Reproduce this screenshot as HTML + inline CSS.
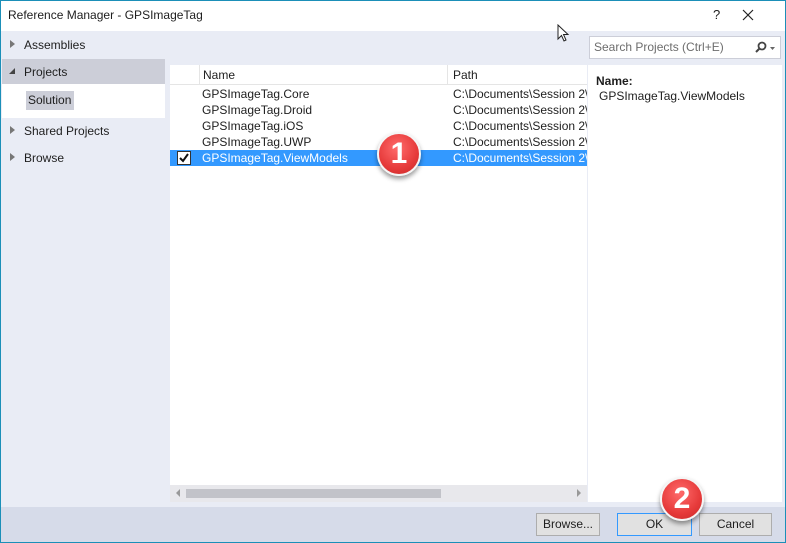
<!DOCTYPE html>
<html><head><style>
*{margin:0;padding:0;box-sizing:border-box}
body{width:786px;height:543px;overflow:hidden;font-family:"Liberation Sans",sans-serif;font-size:12px;color:#1e1e1e;position:relative;background:#fff}
.a{position:absolute;white-space:nowrap}
.win{left:0;top:0;width:786px;height:543px;border:1px solid #1b8fb8}
.row{position:absolute;left:32px;height:16px;line-height:16px;white-space:nowrap}
.path{position:absolute;left:283px;height:16px;line-height:16px;white-space:nowrap}
.nav{position:absolute;left:24px;height:16px;line-height:16px;font-size:12px}
.tri{position:absolute;left:10px;width:0;height:0;border-top:4px solid transparent;border-bottom:4px solid transparent;border-left:5px solid #777}
.btn{position:absolute;top:513px;height:23px;border:1px solid #adadad;background:#e1e1e1;text-align:center;line-height:21px}
.badge{position:absolute;width:44px;height:44px;border-radius:50%;background:radial-gradient(circle at 45% 35%,#ff6b6b,#e63a3a 60%,#c62828);color:#fff;font-weight:bold;font-size:30px;text-align:center;line-height:40px;box-shadow:0 3px 5px rgba(0,0,0,.4);border:2px solid #f5f5f5}
</style></head><body>
<div class="a" style="left:0;top:31px;width:786px;height:512px;background:#e9ecf5"></div>
<div class="a" style="left:8px;top:8px;font-size:12px">Reference Manager - GPSImageTag</div>
<div class="a" style="left:713px;top:7px;font-size:13px">?</div>
<svg class="a" style="left:742px;top:9px" width="12" height="12"><path d="M1 1L11 11M11 1L1 11" stroke="#222" stroke-width="1.2"/></svg>
<!-- left nav -->
<div class="tri" style="top:40px"></div><div class="nav" style="top:37px">Assemblies</div>
<div class="a" style="left:2px;top:59px;width:163px;height:25px;background:#ccced8"></div>
<div class="a" style="left:9px;top:68px;width:0;height:0;border-left:6px solid transparent;border-bottom:6px solid #444"></div>
<div class="nav" style="top:64px">Projects</div>
<div class="a" style="left:2px;top:84px;width:163px;height:34px;background:#fff"></div>
<div class="a" style="left:26px;top:91px;width:48px;height:19px;background:#ccced8;line-height:19px;padding-left:2px">Solution</div>
<div class="tri" style="top:126px"></div><div class="nav" style="top:123px">Shared Projects</div>
<div class="tri" style="top:153px"></div><div class="nav" style="top:150px">Browse</div>
<!-- search -->
<div class="a" style="left:589px;top:36px;width:192px;height:23px;background:#fff;border:1px solid #ccced8;color:#6d6d6d;line-height:21px;padding-left:4px">Search Projects (Ctrl+E)</div>
<svg class="a" style="left:754px;top:41px" width="24" height="14"><circle cx="8" cy="5" r="3.5" fill="none" stroke="#444" stroke-width="1.8"/><path d="M5.5 7.5L2 11" stroke="#444" stroke-width="2"/><path d="M16 6h5l-2.5 3z" fill="#666"/></svg>
<!-- list -->
<div class="a" style="left:170px;top:65px;width:417px;height:437px;background:#fff"></div>
<div class="a" style="left:170px;top:65px;width:417px;height:20px;background:#fff;border-bottom:1px solid #e5e5e5"></div>
<div class="a" style="left:199px;top:65px;width:1px;height:20px;background:#e5e5e5"></div>
<div class="a" style="left:447px;top:65px;width:1px;height:20px;background:#e5e5e5"></div>
<div class="a" style="left:203px;top:68px">Name</div>
<div class="a" style="left:453px;top:68px">Path</div>
<div class="a" style="left:170px;top:150px;width:417px;height:16px;background:#3399ff"></div>
<div class="a" style="left:170px;top:86px;width:417px;height:80px;overflow:hidden">
<div class="row" style="top:0">GPSImageTag.Core</div><div class="path" style="top:0">C:\Documents\Session 2\</div>
<div class="row" style="top:16px">GPSImageTag.Droid</div><div class="path" style="top:16px">C:\Documents\Session 2\</div>
<div class="row" style="top:32px">GPSImageTag.iOS</div><div class="path" style="top:32px">C:\Documents\Session 2\</div>
<div class="row" style="top:48px">GPSImageTag.UWP</div><div class="path" style="top:48px">C:\Documents\Session 2\</div>
<div class="row" style="top:64px;color:#fff">GPSImageTag.ViewModels</div><div class="path" style="top:64px;color:#fff">C:\Documents\Session 2\</div>
</div>
<div class="a" style="left:177px;top:151px;width:14px;height:14px;background:#fff;border:1px solid #333"></div>
<svg class="a" style="left:179px;top:153px" width="10" height="10"><path d="M1 5L4 8L9 1" fill="none" stroke="#111" stroke-width="2"/></svg>
<!-- scrollbar -->
<div class="a" style="left:170px;top:485px;width:417px;height:17px;background:#e8e8ec"></div>
<div class="a" style="left:176px;top:489px;border-top:4px solid transparent;border-bottom:4px solid transparent;border-right:4px solid #999"></div>
<div class="a" style="left:186px;top:489px;width:255px;height:9px;background:#c2c3c9"></div>
<div class="a" style="left:577px;top:489px;border-top:4px solid transparent;border-bottom:4px solid transparent;border-left:4px solid #999"></div>
<!-- details -->
<div class="a" style="left:588px;top:65px;width:194px;height:437px;background:#fff"></div>
<div class="a" style="left:596px;top:74px;font-weight:bold">Name:</div>
<div class="a" style="left:599px;top:89px">GPSImageTag.ViewModels</div>
<!-- bottom -->
<div class="a" style="left:1px;top:507px;width:784px;height:35px;background:#d6dbe9"></div>
<div class="btn" style="left:536px;width:64px">Browse...</div>
<div class="btn" style="left:617px;width:75px;border-color:#3399ff">OK</div>
<div class="btn" style="left:699px;width:73px">Cancel</div>
<div class="win a"></div>
<svg class="a" style="left:557px;top:24px" width="14" height="20"><path d="M1 1L1 15L4.5 11.5L7 17L9 16L6.5 10.5L11 10.5Z" fill="#fff" stroke="#222" stroke-width="1"/></svg>
<div class="badge" style="left:377px;top:132px">1</div>
<div class="badge" style="left:660px;top:477px">2</div>
</body></html>
